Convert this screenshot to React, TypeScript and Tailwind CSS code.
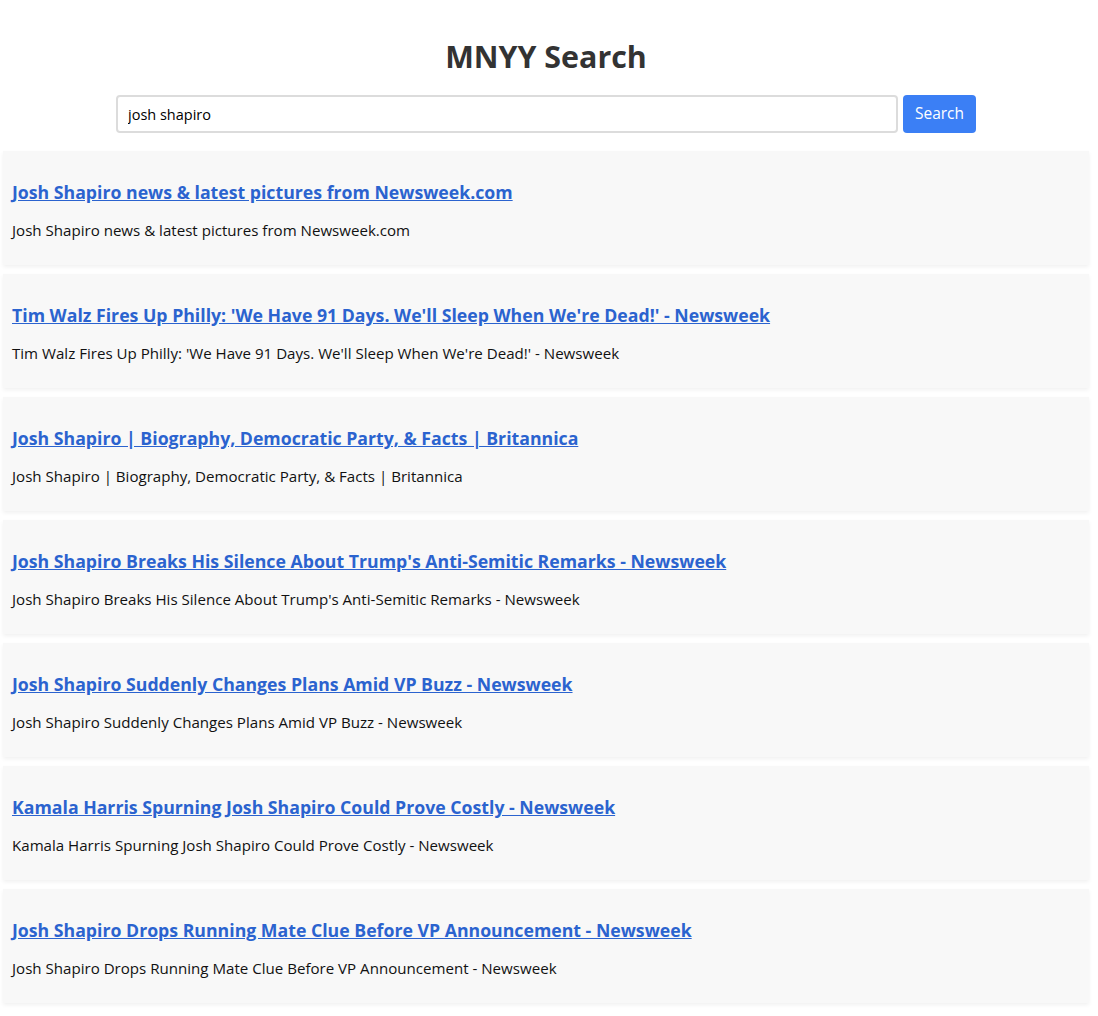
const results = [
  "Josh Shapiro news & latest pictures from Newsweek.com",
  "Tim Walz Fires Up Philly: 'We Have 91 Days. We'll Sleep When We're Dead!' - Newsweek",
  "Josh Shapiro | Biography, Democratic Party, & Facts | Britannica",
  "Josh Shapiro Breaks His Silence About Trump's Anti-Semitic Remarks - Newsweek",
  "Josh Shapiro Suddenly Changes Plans Amid VP Buzz - Newsweek",
  "Kamala Harris Spurning Josh Shapiro Could Prove Costly - Newsweek",
  "Josh Shapiro Drops Running Mate Clue Before VP Announcement - Newsweek",
];

export default function App() {
  return (
    <div
      className="min-h-screen bg-white w-[1092px]"
      style={{ fontFamily: '"Open Sans", sans-serif' }}
    >
      <h1 className="pt-[36px] text-center text-[30.4px] leading-[42px] font-bold text-[#333]">
        MNYY Search
      </h1>
      <form
        className="mt-[17px] flex justify-center gap-[5px]"
        onSubmit={(e) => e.preventDefault()}
      >
        <input
          defaultValue="josh shapiro"
          className="w-[782px] h-[38px] px-[10px] text-[14.5px] text-black border-2 border-[#dcdcdc] rounded-[4px] outline-none"
        />
        <button className="w-[73px] h-[38px] rounded-[4px] bg-[#3b7ff5] text-white text-[15.5px]">
          Search
        </button>
      </form>
      <div className="mt-[18px] flex flex-col gap-[9px] pl-[3px] pr-[3px]">
        {results.map((r) => (
          <div
            key={r}
            className="bg-[#f8f8f8] pt-[27px] pb-[24px] px-[9px] shadow-[0_2px_4px_rgba(0,0,0,0.06)]"
          >
            <a
              href="#"
              className="block text-[17.7px] leading-[28px] font-bold text-[#2b63cf] underline"
            >
              {r}
            </a>
            <p className="mt-[13px] text-[15.1px] leading-[22px] text-[#111]">{r}</p>
          </div>
        ))}
      </div>
    </div>
  );
}
